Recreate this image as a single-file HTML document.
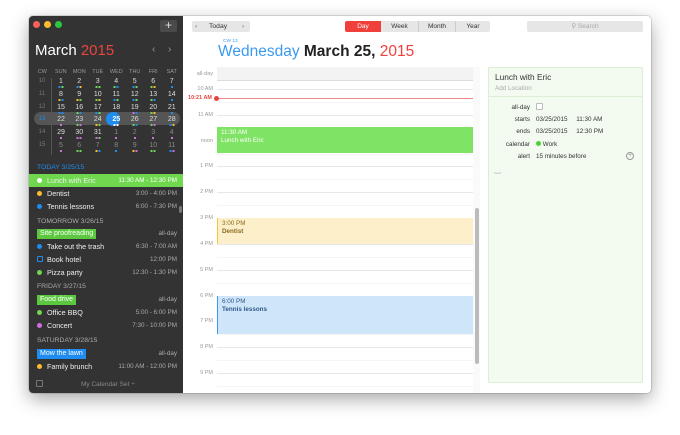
<!DOCTYPE html>
<html><head><style>
*{margin:0;padding:0;box-sizing:border-box}
body{width:680px;height:435px;background:#fff;font-family:"Liberation Sans",sans-serif;position:relative;overflow:hidden}
.a{position:absolute}
#win{left:29px;top:16px;width:622px;height:377px;background:#fff;border-radius:4px;box-shadow:0 6px 18px rgba(0,0,0,.35),0 0 0 1px rgba(0,0,0,.12);overflow:hidden}
#side{left:0;top:0;width:154px;height:377px;background:#333}
.tl{width:7px;height:7px;border-radius:50%;top:5px}
.cal td{width:18.5px;text-align:center;color:#ddd;font-size:7px;height:12.8px;vertical-align:top;position:relative}
.cal{position:absolute;left:4px;top:50px;border-collapse:collapse}
.cal th{font-size:5.5px;color:#999;font-weight:normal;height:12px;width:18.5px}
.cal td.cw{color:#777;font-size:6px;border-right:1px solid #555}
.cal td.g{color:#888}
.dots{position:absolute;left:50%;top:8px;transform:translateX(-50%);height:2px;display:flex;gap:1px}
.dots i{display:block;width:2px;height:2px}
.li{position:absolute;left:0;width:154px;height:13px;font-size:7.2px;color:#eee;line-height:13px}
.li .d{position:absolute;left:8px;top:4px;width:5px;height:5px;border-radius:50%}
.li .n{position:absolute;left:18px}
.li .t{position:absolute;right:6px;color:#aaa;font-size:6.3px}
.hd{position:absolute;left:8px;font-size:6.8px;color:#aaa}
.tag{position:absolute;left:8px;height:10px;top:1.5px;line-height:10px;padding:0 3px;color:#fff;font-size:7px}
.hr{position:absolute;left:188px;width:256px;height:1px;background:#e8e8e8}
.hh{position:absolute;left:188px;width:256px;height:1px;background:#f5f5f5}
.hl{position:absolute;width:184px;text-align:right;font-size:5.5px;color:#999;left:0}
.ev{position:absolute;left:188px;width:256px;font-size:6.3px;padding:2px 4px;line-height:8px}
.seg{position:absolute;top:5px;height:11px;font-size:6.5px;text-align:center;line-height:11px;background:#e6e6e6;color:#333}
.dl{position:absolute;width:44px;text-align:right;font-size:6.3px;color:#333}
.dv{position:absolute;left:507px;font-size:6.3px;color:#333}
</style></head><body>
<div id="win" class="a">
<div id="side" class="a">
 <div class="a tl" style="left:4px;background:#fc5f57"></div>
 <div class="a tl" style="left:15px;background:#fdbc2e"></div>
 <div class="a tl" style="left:26px;background:#2ac840"></div>
 <div class="a" style="left:131px;top:4px;width:17px;height:12px;background:#4a4a4a;border-radius:2px;color:#ddd;font-size:12px;line-height:11px;text-align:center">+</div>
 <div class="a" style="left:6px;top:26px;font-size:15px;color:#fff">March <span style="color:#e8453c">2015</span></div>
 <div class="a" style="left:123px;top:28px;font-size:10px;color:#999">‹</div>
 <div class="a" style="left:139px;top:28px;font-size:10px;color:#999">›</div>
 <div class="a" style="left:5px;top:96px;width:146px;height:13px;background:#555;border-radius:7px"></div>
 <div class="a" style="left:77px;top:96px;width:14px;height:14px;background:#1e8cf0;border-radius:50%"></div>
 <table class="cal">
 <tr><th>CW</th><th>SUN</th><th>MON</th><th>TUE</th><th>WED</th><th>THU</th><th>FRI</th><th>SAT</th></tr>
 <tr><td class="cw">10</td><td>1<span class="dots"><i style="background:#1e8cf0"></i><i style="background:#6fd655"></i></span></td><td>2<span class="dots"><i style="background:#1e8cf0"></i><i style="background:#fdbc2e"></i></span></td><td>3<span class="dots"><i style="background:#6fd655"></i><i style="background:#6fd655"></i></span></td><td>4<span class="dots"><i style="background:#6fd655"></i><i style="background:#1e8cf0"></i></span></td><td>5<span class="dots"><i style="background:#1e8cf0"></i><i style="background:#6fd655"></i></span></td><td>6<span class="dots"><i style="background:#6fd655"></i><i style="background:#fdbc2e"></i></span></td><td>7<span class="dots"><i style="background:#1e8cf0"></i></span></td></tr>
 <tr><td class="cw">11</td><td>8<span class="dots"><i style="background:#fdbc2e"></i><i style="background:#1e8cf0"></i></span></td><td>9<span class="dots"><i style="background:#fdbc2e"></i><i style="background:#6fd655"></i></span></td><td>10<span class="dots"><i style="background:#6fd655"></i><i style="background:#fdbc2e"></i></span></td><td>11<span class="dots"><i style="background:#1e8cf0"></i><i style="background:#6fd655"></i></span></td><td>12<span class="dots"><i style="background:#1e8cf0"></i><i style="background:#6fd655"></i></span></td><td>13<span class="dots"><i style="background:#6fd655"></i><i style="background:#1e8cf0"></i></span></td><td>14<span class="dots"><i style="background:#1e8cf0"></i></span></td></tr>
 <tr><td class="cw">12</td><td>15<span class="dots"><i style="background:#1e8cf0"></i><i style="background:#1e8cf0"></i></span></td><td>16<span class="dots"><i style="background:#6fd655"></i><i style="background:#1e8cf0"></i></span></td><td>17<span class="dots"><i style="background:#1e8cf0"></i><i style="background:#6fd655"></i></span></td><td>18<span class="dots"><i style="background:#1e8cf0"></i></span></td><td>19<span class="dots"><i style="background:#cf6fe0"></i><i style="background:#1e8cf0"></i></span></td><td>20<span class="dots"><i style="background:#6fd655"></i><i style="background:#fdbc2e"></i></span></td><td>21<span class="dots"><i style="background:#1e8cf0"></i></span></td></tr>
 <tr><td class="cw" style="color:#1e8cf0">13</td><td>22<span class="dots"><i style="background:#cf6fe0"></i></span></td><td>23<span class="dots"><i style="background:#6fd655"></i><i style="background:#cf6fe0"></i></span></td><td>24<span class="dots"><i style="background:#fdbc2e"></i><i style="background:#6fd655"></i></span></td><td style="color:#fff;font-weight:bold">25<span class="dots"><i style="background:#fff"></i><i style="background:#fff"></i></span></td><td>26<span class="dots"><i style="background:#6fd655"></i><i style="background:#1e8cf0"></i></span></td><td>27<span class="dots"><i style="background:#6fd655"></i><i style="background:#cf6fe0"></i></span></td><td>28<span class="dots"><i style="background:#1e8cf0"></i><i style="background:#fdbc2e"></i></span></td></tr>
 <tr><td class="cw">14</td><td>29<span class="dots"><i style="background:#cf6fe0"></i></span></td><td>30<span class="dots"><i style="background:#cf6fe0"></i><i style="background:#cf6fe0"></i></span></td><td>31<span class="dots"><i style="background:#cf6fe0"></i><i style="background:#6fd655"></i></span></td><td class="g">1<span class="dots"><i style="background:#cf6fe0"></i></span></td><td class="g">2<span class="dots"><i style="background:#cf6fe0"></i></span></td><td class="g">3<span class="dots"><i style="background:#cf6fe0"></i></span></td><td class="g">4<span class="dots"><i style="background:#cf6fe0"></i></span></td></tr>
 <tr><td class="cw">15</td><td class="g">5<span class="dots"><i style="background:#cf6fe0"></i></span></td><td class="g">6<span class="dots"><i style="background:#6fd655"></i><i style="background:#6fd655"></i></span></td><td class="g">7<span class="dots"><i style="background:#fdbc2e"></i><i style="background:#1e8cf0"></i></span></td><td class="g">8<span class="dots"><i style="background:#1e8cf0"></i></span></td><td class="g">9<span class="dots"><i style="background:#fdbc2e"></i><i style="background:#cf6fe0"></i></span></td><td class="g">10<span class="dots"><i style="background:#6fd655"></i><i style="background:#6fd655"></i></span></td><td class="g">11<span class="dots"><i style="background:#1e8cf0"></i><i style="background:#cf6fe0"></i></span></td></tr>
 </table>
 <div class="hd" style="top:148px;color:#1e8cf0">TODAY 3/25/15</div>
 <div class="li" style="top:158px;background:#6fd84f"><span class="d" style="background:#fff"></span><span class="n">Lunch with Eric</span><span class="t" style="color:#fff">11:30 AM - 12:30 PM</span></div>
 <div class="li" style="top:171px"><span class="d" style="background:#fdbc2e"></span><span class="n">Dentist</span><span class="t">3:00 - 4:00 PM</span></div>
 <div class="li" style="top:184px"><span class="d" style="background:#1e8cf0"></span><span class="n">Tennis lessons</span><span class="t">6:00 - 7:30 PM</span></div>
 <div class="a" style="left:150px;top:190px;width:3px;height:7px;background:#777;border-radius:2px"></div>
 <div class="hd" style="top:202px">TOMORROW 3/26/15</div>
 <div class="li" style="top:211px"><span class="tag" style="background:#5bc840">Site proofreading</span><span class="t">all-day</span></div>
 <div class="li" style="top:224px"><span class="d" style="background:#1e8cf0"></span><span class="n">Take out the trash</span><span class="t">6:30 - 7:00 AM</span></div>
 <div class="li" style="top:237px"><span class="d" style="border:1px solid #1e8cf0;border-radius:1px;width:6px;height:6px;top:3px"></span><span class="n">Book hotel</span><span class="t">12:00 PM</span></div>
 <div class="li" style="top:250px"><span class="d" style="background:#6fd655"></span><span class="n">Pizza party</span><span class="t">12:30 - 1:30 PM</span></div>
 <div class="hd" style="top:267px">FRIDAY 3/27/15</div>
 <div class="li" style="top:277px"><span class="tag" style="background:#5bc840">Food drive</span><span class="t">all-day</span></div>
 <div class="li" style="top:290px"><span class="d" style="background:#6fd655"></span><span class="n">Office BBQ</span><span class="t">5:00 - 6:00 PM</span></div>
 <div class="li" style="top:303px"><span class="d" style="background:#cf6fe0"></span><span class="n">Concert</span><span class="t">7:30 - 10:00 PM</span></div>
 <div class="hd" style="top:321px">SATURDAY 3/28/15</div>
 <div class="li" style="top:331px"><span class="tag" style="background:#1e8cf0">Mow the lawn</span><span class="t">all-day</span></div>
 <div class="li" style="top:344px"><span class="d" style="background:#fdbc2e"></span><span class="n">Family brunch</span><span class="t">11:00 AM - 12:00 PM</span></div>
 <div class="a" style="left:7px;top:364px;width:7px;height:7px;border:1px solid #777;border-radius:1px"></div>
 <div class="a" style="left:52px;top:365px;font-size:6.5px;color:#888">My Calendar Set ÷</div>
</div>
<!-- toolbar -->
<div class="a" style="left:163px;top:5px;width:58px;height:11px;background:#e6e6e6;border-radius:2px;font-size:6.8px;line-height:11px;color:#333"><span class="a" style="left:3px;color:#777">‹</span><span class="a" style="left:17px">Today</span><span class="a" style="left:50px;color:#777">›</span></div>
<div class="seg" style="left:316px;width:36px;background:#ef403b;color:#fff;border-radius:2px 0 0 2px">Day</div>
<div class="seg" style="left:352px;width:37px">Week</div>
<div class="seg" style="left:389px;width:37px;border-left:1px solid #ccc">Month</div>
<div class="seg" style="left:426px;width:35px;border-left:1px solid #ccc;border-radius:0 2px 2px 0">Year</div>
<div class="seg" style="left:498px;width:116px;color:#aaa;border-radius:2px">⚲ Search</div>
<div class="a" style="left:194px;top:23px;font-size:4.8px;color:#3b99ef">CW 13</div>
<div class="a" style="left:189px;top:27px;font-size:15.5px;color:#222;white-space:nowrap"><span style="color:#3b99ef">Wednesday</span> <b style="font-weight:bold">March 25,</b> <span style="color:#ef403b">2015</span></div>
<!-- grid -->
<div class="a" style="left:188px;top:51px;width:263px;height:326px;background:#fafafa"></div>
<div class="a" style="left:188px;top:51px;width:256px;height:326px;background:#fff"></div>
<div class="a" style="left:188px;top:51px;width:256px;height:14px;background:#f3f3f3;border-bottom:1px solid #ddd"></div>
<div class="hl" style="top:55px">all-day</div>
<div class="hr" style="top:73px"></div><div class="hl" style="top:70px">10 AM</div>
<div class="a" style="left:188px;top:82px;width:256px;height:1px;background:#f08a86"></div>
<div class="a" style="left:185px;top:80px;width:5px;height:5px;border-radius:50%;background:#e8453c"></div>
<div class="hl" style="top:79px;width:183px;color:#e8453c;font-weight:bold">10:21 AM</div>
<div class="hh" style="top:86px"></div>
<div class="hr" style="top:99px"></div><div class="hl" style="top:96px">11 AM</div>
<div class="hh" style="top:112px"></div>
<div class="hr" style="top:125px"></div><div class="hl" style="top:122px">noon</div>
<div class="hh" style="top:138px"></div>
<div class="hr" style="top:150px"></div><div class="hl" style="top:147px">1 PM</div>
<div class="hh" style="top:163px"></div>
<div class="hr" style="top:176px"></div><div class="hl" style="top:173px">2 PM</div>
<div class="hh" style="top:189px"></div>
<div class="hr" style="top:202px"></div><div class="hl" style="top:199px">3 PM</div>
<div class="hh" style="top:215px"></div>
<div class="hr" style="top:228px"></div><div class="hl" style="top:225px">4 PM</div>
<div class="hh" style="top:241px"></div>
<div class="hr" style="top:254px"></div><div class="hl" style="top:251px">5 PM</div>
<div class="hh" style="top:267px"></div>
<div class="hr" style="top:280px"></div><div class="hl" style="top:277px">6 PM</div>
<div class="hh" style="top:293px"></div>
<div class="hr" style="top:305px"></div><div class="hl" style="top:302px">7 PM</div>
<div class="hh" style="top:318px"></div>
<div class="hr" style="top:331px"></div><div class="hl" style="top:328px">8 PM</div>
<div class="hh" style="top:344px"></div>
<div class="hr" style="top:357px"></div><div class="hl" style="top:354px">9 PM</div>
<div class="hh" style="top:370px"></div>
<div class="ev" style="top:111px;height:26px;background:#7fe365;color:#fff">11:30 AM<br>Lunch with Eric</div>
<div class="ev" style="top:202px;height:26px;background:#fcefc9;border-left:1px solid #f5c542;color:#8a6a1c">3:00 PM<br><b style="font-weight:bold">Dentist</b></div>
<div class="ev" style="top:280px;height:38px;background:#cfe6fa;border-left:1px solid #3b99ef;color:#2d5a86">6:00 PM<br><b style="font-weight:bold">Tennis lessons</b></div>
<div class="a" style="left:446px;top:192px;width:4px;height:156px;background:#bbb;border-radius:2px"></div>
<!-- detail -->
<div class="a" style="left:459px;top:51px;width:155px;height:316px;background:#f3faf0;border:1px solid #dcefd5;border-radius:2px"></div>
<div class="a" style="left:459px;top:80px;width:155px;height:1px;background:#dcefd5"></div>
<div class="a" style="left:466px;top:56px;font-size:8.3px;color:#333">Lunch with Eric</div>
<div class="a" style="left:466px;top:69px;font-size:6.3px;color:#aaa">Add Location</div>
<div class="dl" style="left:457px;top:88px">all-day</div><div class="a" style="left:507px;top:87px;width:7px;height:7px;border:1px solid #bbb;background:#fff;border-radius:1px"></div>
<div class="dl" style="left:457px;top:100px">starts</div><div class="dv" style="top:100px">03/25/2015 &nbsp;&nbsp;&nbsp;&nbsp;11:30 AM</div>
<div class="dl" style="left:457px;top:112px">ends</div><div class="dv" style="top:112px">03/25/2015 &nbsp;&nbsp;&nbsp;&nbsp;12:30 PM</div>
<div class="dl" style="left:457px;top:125px">calendar</div><div class="dv" style="top:125px"><span style="display:inline-block;width:5px;height:5px;border-radius:50%;background:#4cd137"></span> Work</div>
<div class="dl" style="left:457px;top:137px">alert</div><div class="dv" style="top:137px">15 minutes before</div>
<div class="a" style="left:597px;top:136px;width:8px;height:8px;border:1px solid #999;border-radius:50%;font-size:7px;line-height:6px;text-align:center;color:#999">+</div>
<div class="a" style="left:466px;top:152px;font-size:8px;color:#aaa;transform:scaleX(1.6)">⌣</div>
</div>
</body></html>
